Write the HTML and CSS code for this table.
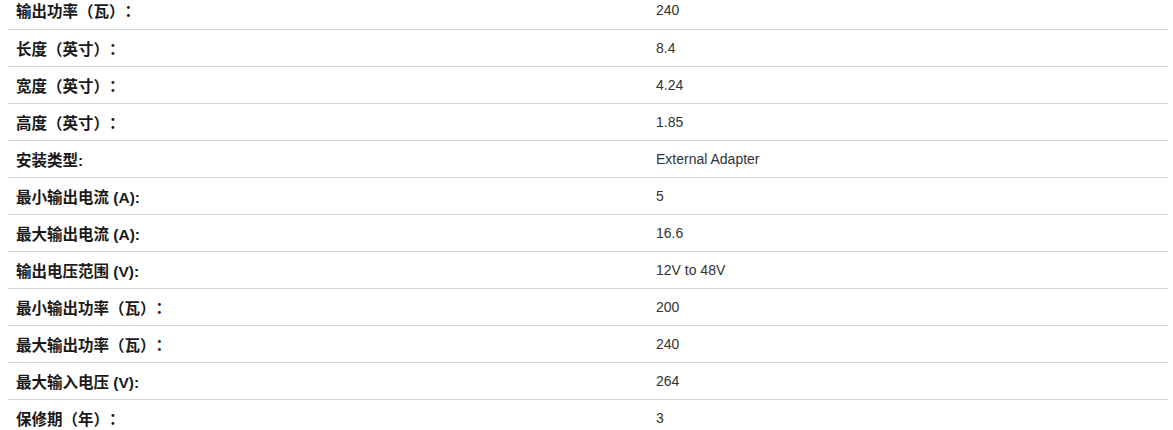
FILE: index.html
```html
<!DOCTYPE html>
<html lang="zh">
<head>
<meta charset="utf-8">
<link rel="stylesheet" href="styles.css">
</head>
<body>
<table class="specs">
<tbody>
<tr><th>输出功率（瓦）：</th><td>240</td></tr>
<tr><th>长度（英寸）：</th><td>8.4</td></tr>
<tr><th>宽度（英寸）：</th><td>4.24</td></tr>
<tr><th>高度（英寸）：</th><td>1.85</td></tr>
<tr><th>安装类型:</th><td>External Adapter</td></tr>
<tr><th>最小输出电流 (A):</th><td>5</td></tr>
<tr><th>最大输出电流 (A):</th><td>16.6</td></tr>
<tr><th>输出电压范围 (V):</th><td>12V to 48V</td></tr>
<tr><th>最小输出功率（瓦）：</th><td>200</td></tr>
<tr><th>最大输出功率（瓦）：</th><td>240</td></tr>
<tr><th>最大输入电压 (V):</th><td>264</td></tr>
<tr><th>保修期（年）：</th><td>3</td></tr>
</tbody>
</table>
</body>
</html>
```
FILE: styles.css
```css
html, body {
  background: #ffffff;
}
body {
  margin: -8px 0 0 8px;
  font-family: "Liberation Sans", Arial, "Noto Sans CJK SC", sans-serif;
  font-size: 14px;
}
.specs {
  width: 1160px;
  border-collapse: collapse;
}
.specs tr {
  height: 37px;
  border-bottom: 1px solid #d3d9df;
}
.specs th {
  width: 624px;
  padding: 0 8px;
  text-align: left;
  font-size: 15.5px;
  font-weight: bold;
  color: #1a1a1a;
  vertical-align: middle;
  text-spacing-trim: space-all;
}
.specs td {
  padding: 0 8px;
  color: #333333;
  vertical-align: middle;
}
```
